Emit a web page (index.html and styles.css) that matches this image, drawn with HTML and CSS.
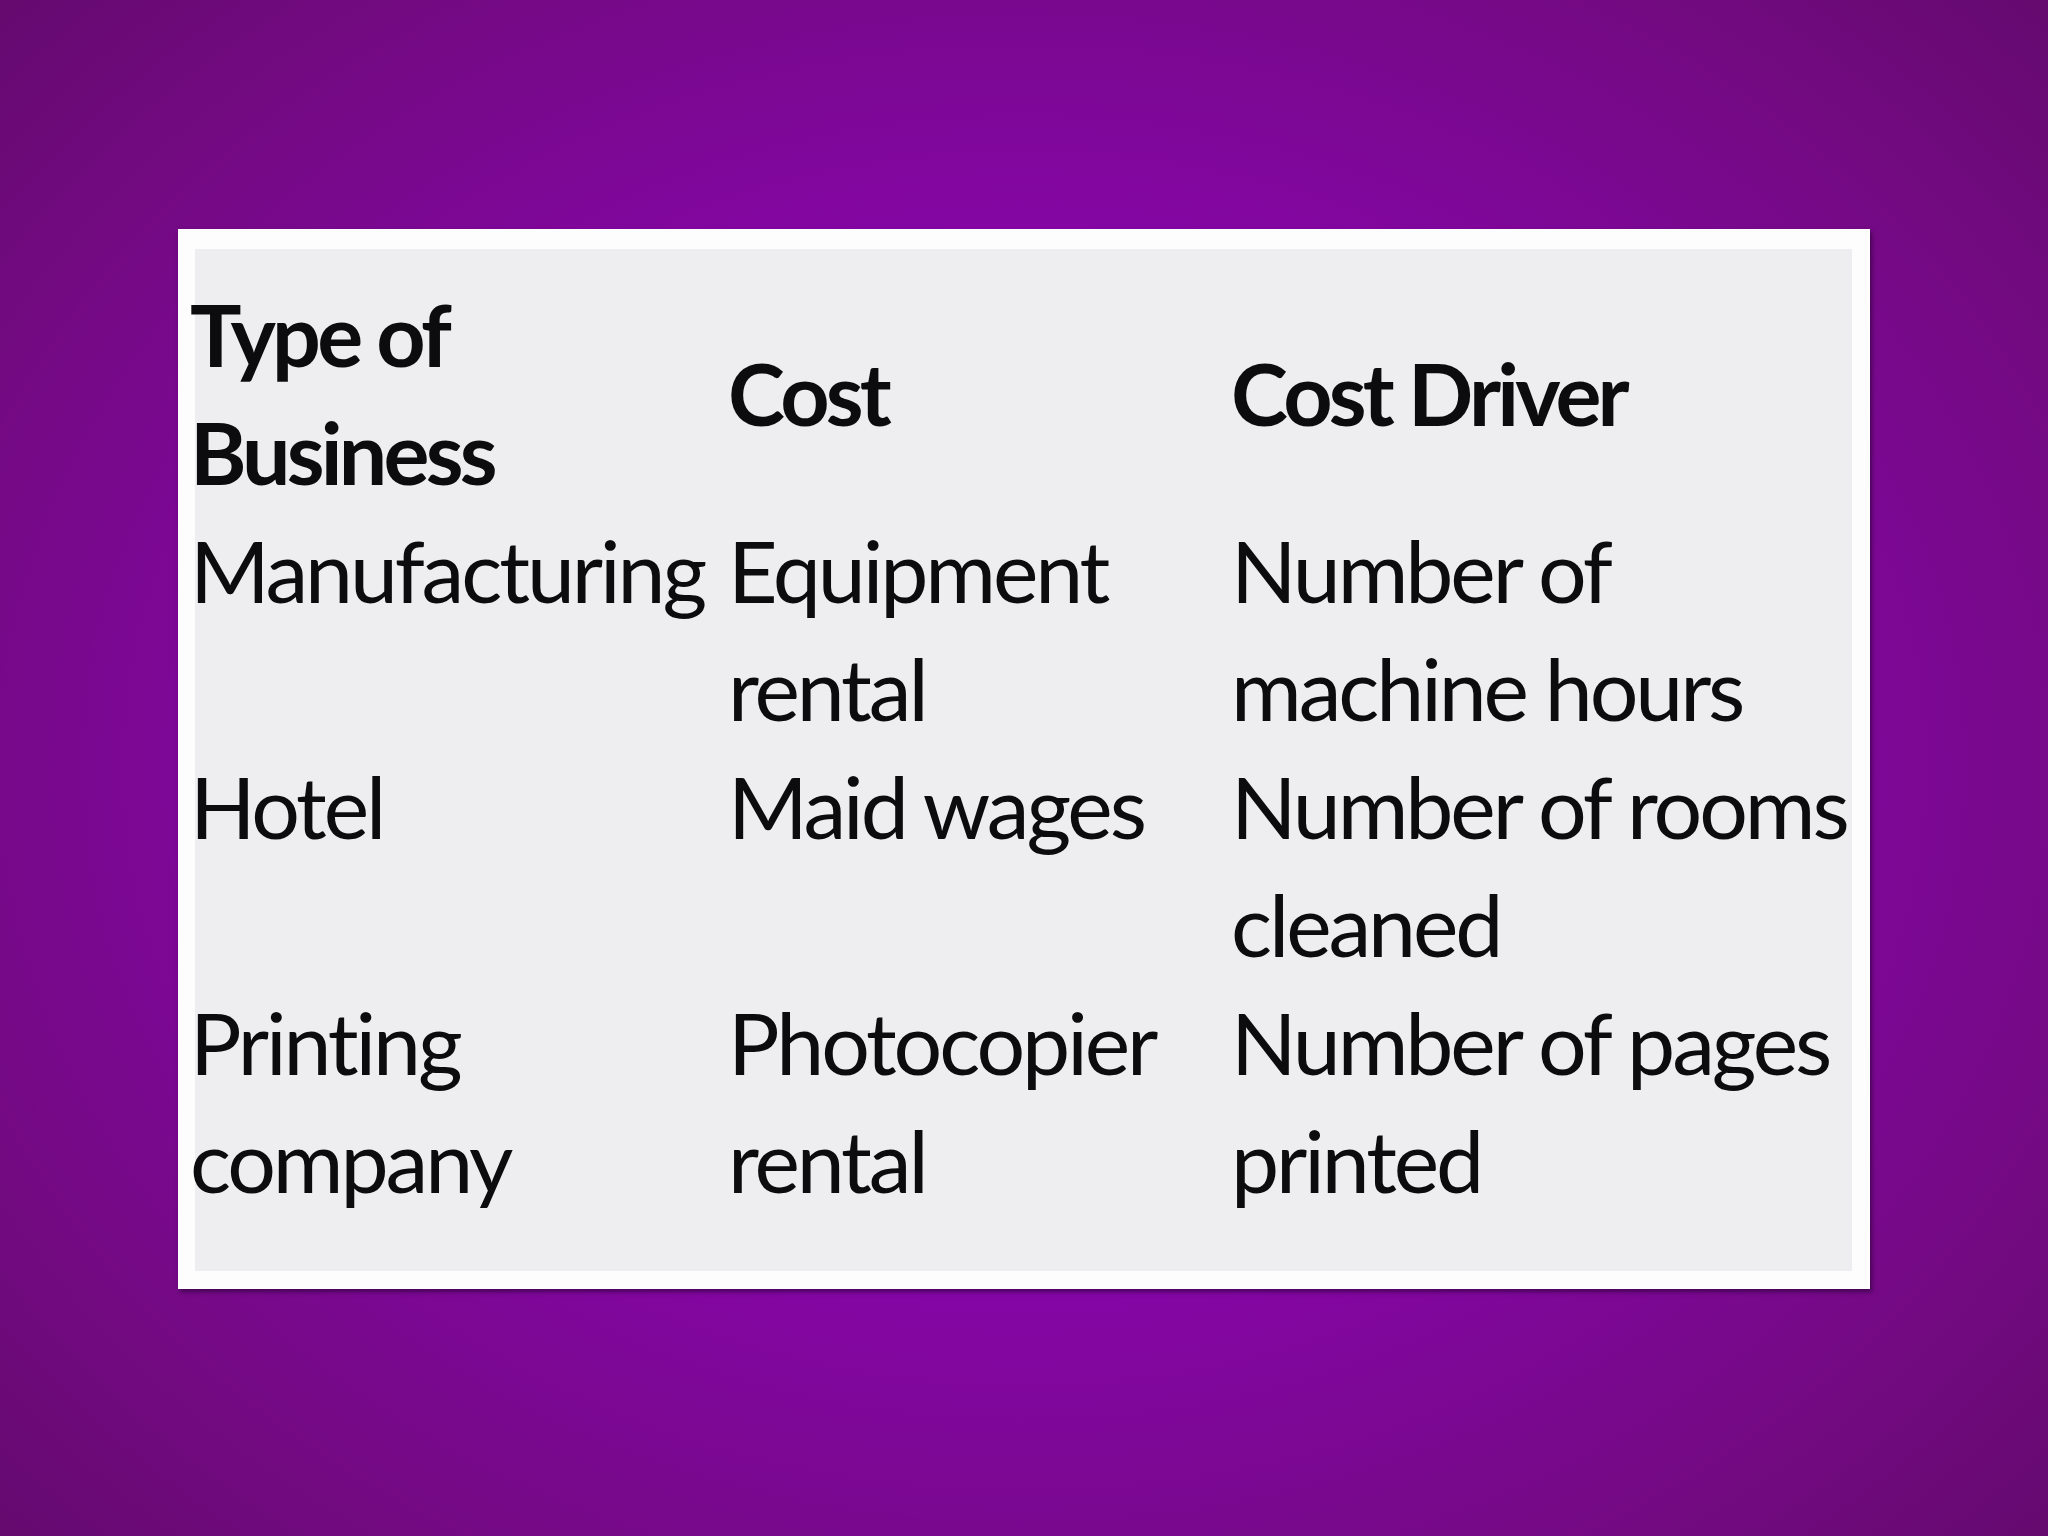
FILE: index.html
```html
<!DOCTYPE html>
<html>
<head>
<meta charset="utf-8">
<link rel="stylesheet" href="styles.css">
</head>
<body>
<div class="slide">
  <div class="card">
    <div class="table">
      <div class="cell head">Type of<br>Business</div>
      <div class="cell head mid">Cost</div>
      <div class="cell head mid">Cost Driver</div>

      <div class="cell">Manufacturing</div>
      <div class="cell">Equipment<br>rental</div>
      <div class="cell">Number of<br>machine hours</div>

      <div class="cell">Hotel</div>
      <div class="cell">Maid wages</div>
      <div class="cell">Number of rooms<br>cleaned</div>

      <div class="cell">Printing<br>company</div>
      <div class="cell">Photocopier<br>rental</div>
      <div class="cell">Number of pages<br>printed</div>
    </div>
  </div>
</div>
</body>
</html>
```
FILE: styles.css
```css
html, body {
  margin: 0;
  padding: 0;
}
body {
  width: 2048px;
  height: 1536px;
  overflow: hidden;
}
.slide {
  width: 2048px;
  height: 1536px;
  box-sizing: border-box;
  padding: 229px 0 0 178px;
  background: radial-gradient(ellipse 75% 80% at 50% 50%, #9302b8 0%, #8605a8 40%, #720a80 75%, #5e0a66 100%);
}
.card {
  width: 1692px;
  height: 1060px;
  box-sizing: border-box;
  padding: 20px 18px 18px 17px;
  background: #fdfdfd;
  box-shadow: 2px 3px 4px rgba(30, 0, 40, 0.55);
}
.table {
  height: 100%;
  box-sizing: border-box;
  background: #eeeef0;
  padding: 26px 0 0 0;
  display: grid;
  grid-template-columns: 538px 503px 1fr;
  align-content: start;
  font-family: Lato, "Liberation Sans", sans-serif;
  font-size: 86px;
  line-height: 118px;
  letter-spacing: -3.1px;
  font-variant-ligatures: none;
  color: #0c0c0e;
}
.cell {
  white-space: nowrap;
  margin-left: -5px;
}
.head {
  font-weight: 700;
  letter-spacing: -3.8px;
}
.mid {
  align-self: center;
}
```
